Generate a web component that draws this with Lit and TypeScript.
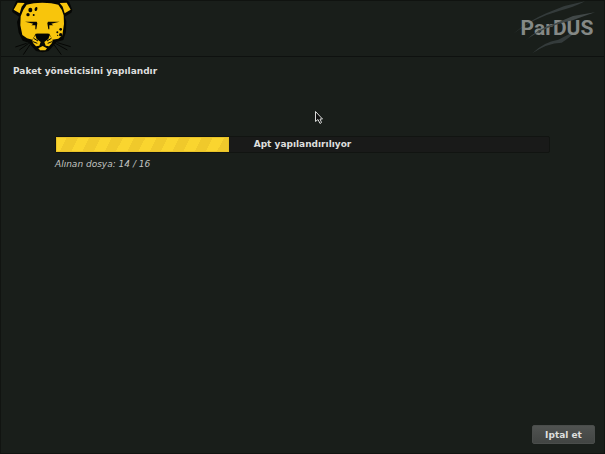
import { LitElement, html, css } from "lit";
import { customElement, property } from "lit/decorators.js";

@customElement("leopard-logo")
class LeopardLogo extends LitElement {
  static styles = css`
    :host { display: block; }
    .art { display: block; width: 64px; height: 56px; }
  `;
  render() {
    return html`
      <svg class="art" viewBox="6 0 192 168" role="img" aria-label="Leopard">
        <path fill="#050604" d="M12 32 L24 4 L32 0 H176 L184 6 L193 30 L190 38 L170 50 L175 64 L174 96 L166 120 L146 126 L132 142 L122 153 L104 157 L84 153 L74 142 L62 128 L44 122 L32 98 L27 66 L33 50 L14 37 Z"/>
        <g fill="none" stroke="#050604" stroke-width="3">
          <path d="M62 130 L34 150 M66 134 L46 164 M56 130 L22 141 M142 130 L178 150 M138 134 L160 164 M148 128 L188 140"/>
        </g>
        <g fill="#f8c50c">
          <path d="M17 29 L29 8 L50 9 L41 20 L35 40 Z"/>
          <path d="M188 29 L176 8 L155 9 L164 20 L170 40 Z"/>
          <path d="M56 14 Q75 8 103 8 Q132 8 151 14 Q163 28 167 46 L168 72 L163 106 L151 116 L133 119 L124 101 H83 L73 119 L57 115 L43 105 L37 76 L38 49 Q43 30 56 14 Z"/>
          <path d="M82 106 L86 117 L98 126 L94 137 L84 139 L75 129 L73 119 Z"/>
          <path d="M125 106 L121 117 L109 126 L113 137 L123 139 L132 129 L134 119 Z"/>
          <path d="M91 145 L104 138 L117 145 L112 151 H96 Z"/>
        </g>
        <g fill="#050604">
          <path d="M51 65 L86 65 L88 70 L85 88 L82 88 L82 76 L70 76 L76 71 L64 68 Z"/>
          <path d="M155 65 L120 65 L118 70 L121 88 L124 88 L124 76 L136 76 L130 71 L142 68 Z"/>
          <path d="M86 101 H121 L117 112 L107 120 V132 H101 V120 L91 112 Z"/>
          <ellipse cx="67" cy="30" rx="6" ry="7"/>
          <ellipse cx="84" cy="27" rx="4" ry="6" transform="rotate(20 84 27)"/>
          <circle cx="60" cy="44" r="5"/><circle cx="77" cy="45" r="3"/>
          <circle cx="158" cy="88" r="4"/><circle cx="148" cy="97" r="3"/>
          <circle cx="158" cy="104" r="5"/><circle cx="149" cy="106" r="2"/>
        </g>
        <g fill="none" stroke="#050604" stroke-width="3">
          <path d="M77 115 L90 123 M75 125 L88 130 M130 115 L117 123 M132 125 L119 130"/>
        </g>
      </svg>
    `;
  }
}

@customElement("pardus-brand")
class PardusBrand extends LitElement {
  static styles = css`
    :host { display: grid; width: 92px; height: 56px; align-items: center; justify-items: center; }
    .claws, .word { grid-area: 1 / 1; }
    .claws { width: 92px; height: 56px; }
    .word { font: bold 21px/52px Roboto, sans-serif; color: #858986; }
  `;
  render() {
    return html`
      <svg class="claws" viewBox="-6 0 276 168" aria-hidden="true">
        <g fill="#343b3b">
          <path d="M0 102 Q48 62 100 40 L154 18 L216 4 Q180 23 140 32 Q60 54 0 102 Z"/>
          <path d="M58 160 Q91 126 136 119 L198 87 Q170 113 146 128 Q102 129 58 160 Z"/>
        </g>
      </svg>
      <span class="word">ParDUS</span>
      <svg class="claws" viewBox="-6 0 276 168" aria-hidden="true">
        <path fill="#414848" d="M36 123 Q76 84 132 68 L180 48 L246 37 Q211 49 179 61 Q88 81 36 123 Z"/>
      </svg>
    `;
  }
}

@customElement("app-root")
class AppRoot extends LitElement {
  @property({ type: Number }) percent = 35;

  static styles = css`
    :host {
      display: flex;
      flex-direction: column;
      box-sizing: border-box;
      position: relative;
      min-height: 100vh;
      background: #191e1a;
      border: 1px solid #111411;
      border-top: 0;
      color: #dedfdd;
      font: 9px/14px "DejaVu Sans", sans-serif;
    }
    .header {
      display: flex;
      justify-content: space-between;
      height: 56px;
      padding: 0 1px 0 9px;
      border-bottom: 1px solid #0e110f;
      box-shadow: inset 0 1px #101310;
    }
    .title { margin: 0; padding: 7px 12px; font-size: 9px; font-weight: bold; }
    .content { flex: 1; padding: 51px 54px 0; }
    .bar {
      display: grid;
      height: 17px;
      box-sizing: border-box;
      border: 1px solid #111411;
      background: #191a19;
      border-radius: 2px;
    }
    .fill, .label { grid-area: 1 / 1; }
    .fill {
      background: repeating-linear-gradient(117deg, #fad52f 0 10px, #f0c92b 10px 20px);
      box-shadow: inset 0 0 0 1px #e9c328;
    }
    .label { text-align: center; font-weight: bold; }
    .status { margin: 4px 0 0; font-style: italic; color: #c2c4c1; }
    .footer { display: flex; justify-content: flex-end; padding: 0 9px 9px; }
    .cancel {
      width: 63px;
      height: 19px;
      padding: 0;
      border: 1px solid #4a4d4b;
      border-radius: 2px;
      background: linear-gradient(#505351, #424543);
      color: #dedfdd;
      font: bold 9px/14px "DejaVu Sans", sans-serif;
    }
    .pointer { position: absolute; left: 313px; top: 110px; width: 10px; height: 15px; }
  `;

  render() {
    return html`
      <header class="header">
        <leopard-logo></leopard-logo>
        <pardus-brand></pardus-brand>
      </header>
      <h1 class="title">Paket yöneticisini yapılandır</h1>
      <main class="content">
        <div class="bar" role="progressbar" aria-labelledby="task" aria-valuenow=${this.percent}>
          <div class="fill" style="width:${this.percent}%"></div>
          <span class="label" id="task">Apt yapılandırılıyor</span>
        </div>
        <p class="status">Alınan dosya: 14 / 16</p>
      </main>
      <footer class="footer">
        <button class="cancel" type="button">Iptal et</button>
      </footer>
      <svg class="pointer" viewBox="0 0 10 15" aria-hidden="true">
        <path d="M1.5 1.5 V11.5 L4 9.5 L6 13.5 L7.5 12.5 L6 9 H8.5 Z" fill="#111" stroke="#d8dad8"/>
      </svg>
    `;
  }
}
